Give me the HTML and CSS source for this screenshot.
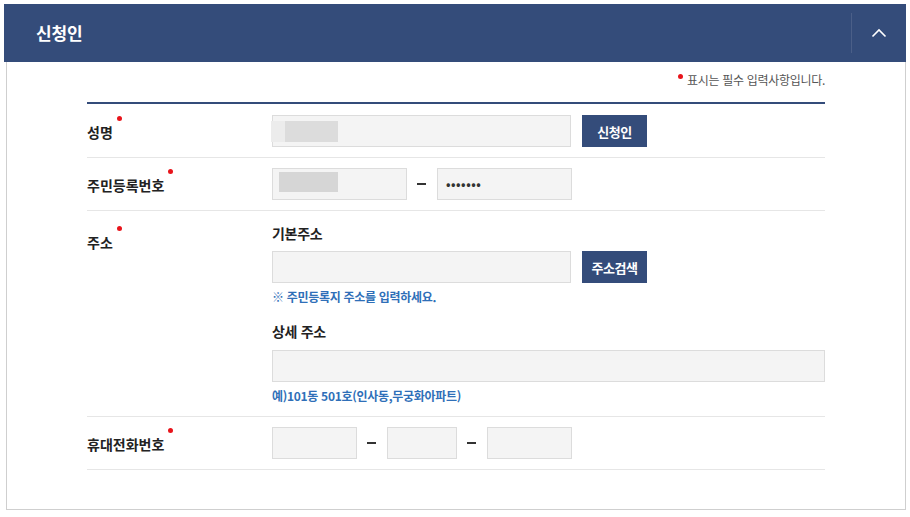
FILE: index.html
```html
<!DOCTYPE html>
<html lang="ko">
<head>
    <meta charset="UTF-8">
    <meta name="viewport" content="width=device-width, initial-scale=1.0">
    <title>신청인</title>
    <link rel="stylesheet" href="styles.css">
</head>
<body>
    <div class="wrap">
        <!-- 상단 타이틀 -->
        <div class="head">
            <h2>신청인</h2>
            <button class="toggle" type="button" aria-label="접기">
                <svg width="16" height="10" viewBox="0 0 16 10"><path d="M1.5 8.5 L8 2 L14.5 8.5" fill="none" stroke="#fff" stroke-width="1.6"/></svg>
            </button>
        </div>

        <div class="panel">
            <p class="notice"><span class="req"></span>표시는 필수 입력사항입니다.</p>

            <div class="form">
                <div class="row">
                    <div class="label"><span class="lbl">성명<span class="req"></span></span></div>
                    <div class="field">
                        <div class="inp w299"><span class="mask mask-name"></span></div>
                        <button class="btn" type="button">신청인</button>
                    </div>
                </div>

                <div class="row">
                    <div class="label"><span class="lbl">주민등록번호<span class="req"></span></span></div>
                    <div class="field">
                        <div class="inp w135"><span class="mask mask-id"></span></div>
                        <span class="dash"></span>
                        <div class="inp w135 pw">•••••••</div>
                    </div>
                </div>

                <div class="row row-top">
                    <div class="label"><span class="lbl">주소<span class="req"></span></span></div>
                    <div class="field-col">
                        <div class="sub">기본주소</div>
                        <div class="field">
                            <div class="inp w299"></div>
                            <button class="btn" type="button">주소검색</button>
                        </div>
                        <p class="hint">※ 주민등록지 주소를 입력하세요.</p>
                        <div class="sub sub2">상세 주소</div>
                        <div class="inp wfull"></div>
                        <p class="hint">예)101동 501호(인사동,무궁화아파트)</p>
                    </div>
                </div>

                <div class="row">
                    <div class="label"><span class="lbl">휴대전화번호<span class="req"></span></span></div>
                    <div class="field">
                        <div class="inp w85"></div>
                        <span class="dash"></span>
                        <div class="inp w70"></div>
                        <span class="dash"></span>
                        <div class="inp w85"></div>
                    </div>
                </div>
            </div>
        </div>
    </div>
</body>
</html>
```

FILE: styles.css
```css
* {
    margin: 0;
    padding: 0;
    box-sizing: border-box;
}

body {
    font-family: "Noto Sans CJK KR", "Noto Sans", sans-serif;
    background-color: #fff;
    color: #222;
}

.wrap {
    width: 902px;
    margin: 4px 0 0 4px;
}

/* 타이틀 바 */
.head {
    height: 58px;
    background-color: #344c7a;
    display: flex;
    align-items: center;
    justify-content: space-between;
    padding-left: 32px;
}

.head h2 {
    color: #fff;
    font-size: 17px;
    font-weight: bold;
    letter-spacing: -0.2px;
    line-height: 24px;
}

.toggle {
    width: 55px;
    height: 40px;
    border: none;
    border-left: 1px solid #4b5f88;
    background: none;
    display: flex;
    align-items: center;
    justify-content: center;
    cursor: pointer;
}

/* 본문 */
.panel {
    height: 448px;
    margin: 0 0 0 2px;
    border: 1px solid #cfcfcf;
    border-top: none;
    padding: 0 80px 0 80px;
}

.notice {
    height: 40px;
    padding-top: 9px;
    text-align: right;
    font-size: 12px;
    color: #555;
    letter-spacing: -0.3px;
    line-height: 18px;
}

.notice .req {
    position: relative;
    top: -6px;
    margin-right: 4px;
}

.req {
    display: inline-block;
    width: 5px;
    height: 5px;
    border-radius: 50%;
    background-color: #e8141b;
}

.form {
    border-top: 2px solid #344c7a;
}

.row {
    display: flex;
    align-items: center;
    border-bottom: 1px solid #e6e6e6;
    padding: 10px 0;
}

.row:first-child {
    padding-top: 11px;
}

.row-top {
    align-items: flex-start;
    padding: 12px 0 11px;
}

.label {
    width: 185px;
    flex-shrink: 0;
}

.row-top .label {
    padding-top: 6px;
}

.lbl {
    position: relative;
    font-size: 14px;
    font-weight: bold;
    letter-spacing: 0;
    line-height: 20px;
    color: #222;
}

.lbl .req {
    position: absolute;
    right: -9px;
    top: -6px;
}

.field {
    display: flex;
    align-items: center;
}

.field-col {
    flex: 1;
}

.inp {
    height: 32px;
    background-color: #f4f4f4;
    border: 1px solid #dcdcdc;
    position: relative;
}

.w299 { width: 299px; }
.w135 { width: 135px; }
.w85 { width: 85px; }
.w70 { width: 70px; }
.wfull { width: 100%; }

.pw {
    font-size: 12px;
    font-weight: bold;
    letter-spacing: 0.5px;
    line-height: 30px;
    padding-left: 8px;
    color: #333;
}

.mask {
    position: absolute;
    display: block;
}

.mask-name {
    left: -2px;
    top: 5px;
    width: 67px;
    height: 21px;
    background: linear-gradient(to right, #ececec 0, #ececec 14px, #dcdcdc 14px);
}

.mask-id {
    left: 6px;
    top: 3px;
    width: 59px;
    height: 20px;
    background-color: #d6d6d6;
}

.dash {
    display: block;
    width: 9px;
    height: 2px;
    background-color: #333;
    margin: 0 11px 0 10px;
}

.btn {
    width: 65px;
    height: 32px;
    margin-left: 11px;
    border: none;
    background-color: #344c7a;
    color: #fff;
    font-family: inherit;
    font-size: 13px;
    font-weight: bold;
    letter-spacing: -0.5px;
    cursor: pointer;
}

.sub {
    font-size: 14px;
    font-weight: bold;
    letter-spacing: -0.3px;
    line-height: 20px;
    margin-bottom: 8px;
}

.sub2 {
    margin-top: 15px;
    margin-bottom: 9px;
}

.hint {
    font-size: 12px;
    font-weight: bold;
    color: #2f6fb8;
    letter-spacing: -0.3px;
    line-height: 18px;
    margin-top: 5px;
}
```
